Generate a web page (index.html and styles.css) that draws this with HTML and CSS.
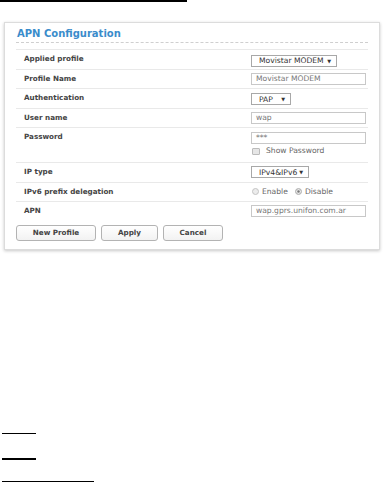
FILE: index.html
```html
<!DOCTYPE html>
<html lang="en">
<head>
    <meta charset="UTF-8">
    <meta name="viewport" content="width=device-width, initial-scale=1.0">
    <title>APN Configuration</title>
    <link rel="stylesheet" href="styles.css">
</head>
<body>
<div class="rule-top"></div>

<div class="panel">
    <h2 class="panel-title">APN Configuration</h2>
    <div class="form">
        <div class="row">
            <div class="label">Applied profile</div>
            <div class="field"><div class="select sel-profile"><span>Movistar MODEM</span><span class="caret">▼</span></div></div>
        </div>
        <div class="row">
            <div class="label">Profile Name</div>
            <div class="field"><div class="input">Movistar MODEM</div></div>
        </div>
        <div class="row">
            <div class="label">Authentication</div>
            <div class="field"><div class="select sel-auth"><span>PAP</span><span class="caret">▼</span></div></div>
        </div>
        <div class="row">
            <div class="label">User name</div>
            <div class="field"><div class="input">wap</div></div>
        </div>
        <div class="row row-tall">
            <div class="label">Password</div>
            <div class="field">
                <div class="input pw">***</div>
                <div class="check-line"><span class="checkbox"></span>Show Password</div>
            </div>
        </div>
        <div class="row">
            <div class="label">IP type</div>
            <div class="field"><div class="select sel-ip"><span>IPv4&amp;IPv6</span><span class="caret">▼</span></div></div>
        </div>
        <div class="row">
            <div class="label">IPv6 prefix delegation</div>
            <div class="field radios">
                <span class="radio"></span>Enable
                <span class="radio on"></span>Disable
            </div>
        </div>
        <div class="row">
            <div class="label">APN</div>
            <div class="field"><div class="input">wap.gprs.unifon.com.ar</div></div>
        </div>
    </div>
    <div class="actions">
        <button class="btn btn-new">New Profile</button>
        <button class="btn btn-apply">Apply</button>
        <button class="btn btn-cancel">Cancel</button>
    </div>
</div>

<div class="doc-lines">
    <div class="line short"></div>
    <div class="line short thick"></div>
    <div class="line long"></div>
</div>
</body>
</html>
```

FILE: styles.css
```css
body {
    margin: 0;
    background-color: #fff;
    font-family: "DejaVu Sans", "Liberation Sans", sans-serif;
    color: #444;
}
.rule-top {
    width: 187px;
    height: 2px;
    background-color: #000;
}
.panel {
    width: 376px;
    margin: 20px 0 0 4px;
    box-sizing: border-box;
    padding: 0 11px 8px;
    border: 1px solid #dcdcdc;
    box-shadow: 0 1px 3px rgba(0, 0, 0, 0.22);
}
.panel-title {
    margin: 0;
    padding: 4px 0 2px 1px;
    font-size: 10px;
    line-height: 13px;
    font-weight: bold;
    color: #3a8ccb;
    border-bottom: 1px dashed #cfcfcf;
}
.form {
    margin-top: 6px;
}
.row {
    display: flex;
    align-items: center;
    height: 18.5px;
    border-top: 1px solid #e9e9e9;
}
.row-tall {
    height: 34px;
    align-items: flex-start;
}
.label {
    width: 227px;
    padding-left: 8px;
    font-size: 7.2px;
    line-height: 18.5px;
    font-weight: bold;
    color: #444;
}
.field {
    font-size: 7.6px;
    color: #666;
}
.input {
    width: 115px;
    height: 12px;
    box-sizing: border-box;
    padding: 0 4px;
    border: 1px solid #c8c8c8;
    line-height: 10px;
    color: #777;
    background-color: #fff;
}
.row-tall .field {
    padding-top: 4px;
}
.check-line {
    display: flex;
    align-items: center;
    margin-top: 2px;
    line-height: 10px;
    color: #666;
}
.checkbox {
    width: 8px;
    height: 7px;
    margin: 0 6px 0 1px;
    box-sizing: border-box;
    border: 1px solid #bbb;
    border-radius: 1px;
    background-color: #e6e6e6;
}
.select {
    display: flex;
    align-items: center;
    justify-content: space-between;
    height: 12px;
    box-sizing: border-box;
    padding: 0 5px 0 7px;
    border: 1px solid #a8a8a8;
    color: #333;
    background-color: #fff;
}
.sel-profile { width: 86px; margin-top: 3px; }
.sel-auth { width: 40px; margin-top: 2px; }
.sel-ip { width: 58px; }
.caret {
    font-size: 5px;
    color: #333;
}
.radios {
    display: flex;
    align-items: center;
    color: #666;
}
.radio {
    width: 7px;
    height: 7px;
    margin: 0 3px 0 1px;
    box-sizing: border-box;
    border: 1px solid #c4c4c4;
    border-radius: 50%;
    background-color: #ececec;
}
.radio.on {
    margin-left: 7px;
    background-color: #777;
    box-shadow: inset 0 0 0 1.2px #eee;
}
.actions {
    display: flex;
    gap: 5px;
    margin-top: 4px;
}
.btn {
    height: 16px;
    padding: 0;
    border: 1px solid #b3b3b3;
    border-radius: 3px;
    background: linear-gradient(#fff, #f2f2f2);
    font-family: inherit;
    font-size: 7.2px;
    font-weight: bold;
    color: #444;
}
.btn-new { width: 80px; }
.btn-apply { width: 57px; }
.btn-cancel { width: 60px; }
.doc-lines {
    margin: 183px 0 0 2px;
}
.line {
    height: 1px;
    background-color: #000;
}
.short { width: 34px; }
.thick {
    height: 2px;
    margin-top: 24px;
}
.long {
    width: 92px;
    margin-top: 21px;
}
```
